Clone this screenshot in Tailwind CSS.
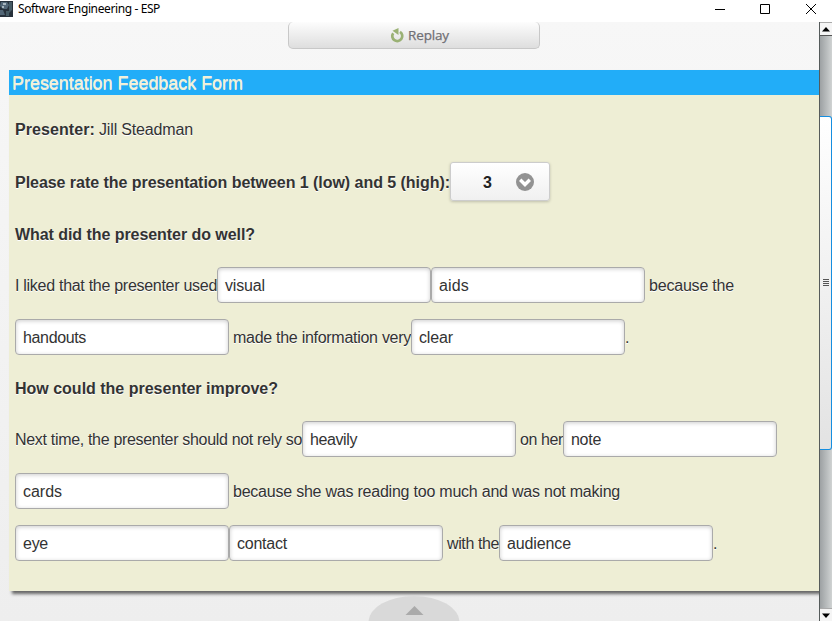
<!DOCTYPE html>
<html lang="en"><head><meta charset="utf-8"><title>Software Engineering - ESP</title>
<script src="https://cdn.jsdelivr.net/npm/@tailwindcss/browser@4"></script></head>
<body class="w-[832px] h-[621px] overflow-hidden bg-white font-['Liberation_Sans',Arial,sans-serif] text-[16px] text-[#333]">
<div class="flex flex-col w-full h-full">
 <header class="flex h-[22px] shrink-0 text-black">
  <svg class="mt-[1px] shrink-0" width="13" height="16" viewBox="0 0 13 16"><path fill="#27313b" d="M0 0h13v16H0z"/><path fill="#526676" d="M1 1h6l2 3-2 4H3L0 5zM0 9h3l2 5H0z"/><path fill="#a8b5bd" d="M3 2h3v2H3zM2 5h2v2H2z"/><path fill="#465b65" d="M9 1h3v8l-3 3zM6 10h3v5H6z"/></svg>
  <span class="ml-[5px] w-[150px] whitespace-nowrap font-['Noto_Sans',sans-serif] text-[12px] leading-[18px]"><span data-w="142">Software Engineering - ESP</span></span>
  <svg class="ml-auto shrink-0" width="132" height="22" viewBox="0 0 132 22" fill="none" stroke="#000"><path d="M15 9.5h10M60.500 4.500h9v9h-9zM106 4l10 10M116 4l-10 10"/></svg>
 </header>
 <div class="flex flex-1 min-h-0">
  <main class="w-[819px] flex flex-col overflow-hidden bg-linear-to-b from-[#f7f7f7] to-[#eeeeee]">
   <button class="ml-[288px] w-[252px] h-[27px] shrink-0 border border-t-0 border-[#c8c8c8] rounded-[5px] bg-linear-to-b from-[#fdfdfd] to-[#dedede] flex items-center pl-[101px] text-[#707075] font-['Open_Sans',sans-serif] text-[13.5px] font-medium">
    <svg width="15" height="17" viewBox="0 0 15 17" fill="none"><path d="M3.200 6.200a5 5 0 1 0 6.800-1.300" stroke="#9ab174" stroke-width="2.700"/><path fill="#9ab174" d="M2.500 3.800L8.500 1v7z"/></svg><span class="ml-[3px] mt-[1px] [-webkit-text-stroke:0.25px_#707075]"><span data-w="41">Replay</span></span>
   </button>
   <section class="mt-[21px] ml-[9px] w-[830px] h-[521px] shrink-0 bg-[#eeeed5] shadow-[3px_3px_3px_#666]">
    <h1 class="h-[25px] bg-[#22adf8] pl-[3px] text-[18px] leading-[26px] text-[#f2f2dc] whitespace-nowrap"><span data-w="231" class="[text-shadow:0_1px_0_#eeeed5]">Presentation Feedback Form</span></h1>
    <div class="pt-[9px] pl-[6px] whitespace-nowrap [text-shadow:0_1px_0_#fff]">
     <div class="h-[52px] flex items-center"><b class="w-[84px]"><span data-w="80">Presenter:</span></b><span><span data-w="94">Jill Steadman</span></span></div>
     <div class="h-[52px] flex items-center"><b class="mt-[2px] w-[435px]"><span data-w="435">Please rate the presentation between 1 (low) and 5 (high):</span></b>
      <div class="mb-[1px] w-[100px] h-[39px] border border-[#ccc] rounded-[3px] bg-linear-to-b from-white to-[#f0f0f0] shadow-[0_1px_3px_#0003] flex items-center text-[#222]"><b class="mt-[2px] ml-[32px] w-[33px]">3</b><svg width="18" height="18" viewBox="0 0 18 18"><circle cx="9" cy="9" r="9" fill="#929292"/><path d="M4.200 6.800L9 11.500 13.800 6.800" fill="none" stroke="#fff" stroke-width="3.400"/></svg></div></div>
     <div class="h-[51px] flex items-center"><b class="mt-[2px]"><span data-w="240">What did the presenter do well?</span></b></div>
     <div class="h-[52px] flex items-center"><span class="mt-[2px] w-[202px]"><span data-w="202">I liked that the presenter used</span></span><div class="w-[214px] h-[36px] border border-[#aaa] rounded-[4px] bg-white pl-[7px] leading-[35px] shadow-[inset_0_1px_4px_#0003]"><span data-w="40">visual</span></div><div class="w-[214px] h-[36px] border border-[#aaa] rounded-[4px] bg-white pl-[7px] leading-[35px] shadow-[inset_0_1px_4px_#0003]"><span data-w="30">aids</span></div><span class="mt-[2px] ml-[4px]"><span data-w="85">because the</span></span></div>
     <div class="h-[52px] flex items-center"><div class="w-[214px] h-[36px] border border-[#aaa] rounded-[4px] bg-white pl-[7px] leading-[35px] shadow-[inset_0_1px_4px_#0003]"><span data-w="63">handouts</span></div><span class="mt-[2px] ml-[4px] w-[178px]"><span data-w="178">made the information very</span></span><div class="w-[214px] h-[36px] border border-[#aaa] rounded-[4px] bg-white pl-[7px] leading-[35px] shadow-[inset_0_1px_4px_#0003]"><span data-w="34">clear</span></div><span class="mt-[2px]">.</span></div>
     <div class="h-[50px] flex items-center"><b class="mt-[2px]"><span data-w="263">How could the presenter improve?</span></b></div>
     <div class="h-[52px] flex items-center"><span class="mt-[2px] w-[287px]"><span data-w="287">Next time, the presenter should not rely so</span></span><div class="w-[214px] h-[36px] border border-[#aaa] rounded-[4px] bg-white pl-[7px] leading-[35px] shadow-[inset_0_1px_4px_#0003]"><span data-w="47">heavily</span></div><span class="mt-[2px] ml-[4px] w-[43px]"><span data-w="43">on her</span></span><div class="w-[214px] h-[36px] border border-[#aaa] rounded-[4px] bg-white pl-[7px] leading-[35px] shadow-[inset_0_1px_4px_#0003]"><span data-w="30">note</span></div></div>
     <div class="h-[52px] flex items-center"><div class="w-[214px] h-[36px] border border-[#aaa] rounded-[4px] bg-white pl-[7px] leading-[35px] shadow-[inset_0_1px_4px_#0003]"><span data-w="39">cards</span></div><span class="mt-[2px] ml-[4px]"><span data-w="387">because she was reading too much and was not making</span></span></div>
     <div class="h-[52px] flex items-center"><div class="w-[214px] h-[36px] border border-[#aaa] rounded-[4px] bg-white pl-[7px] leading-[35px] shadow-[inset_0_1px_4px_#0003]"><span data-w="25">eye</span></div><div class="w-[214px] h-[36px] border border-[#aaa] rounded-[4px] bg-white pl-[7px] leading-[35px] shadow-[inset_0_1px_4px_#0003]"><span data-w="50">contact</span></div><span class="mt-[2px] ml-[4px] w-[52px]"><span data-w="52">with the</span></span><div class="w-[214px] h-[36px] border border-[#aaa] rounded-[4px] bg-white pl-[7px] leading-[35px] shadow-[inset_0_1px_4px_#0003]"><span data-w="64">audience</span></div><span class="mt-[2px]">.</span></div>
    </div>
   </section>
   <svg class="relative ml-[368px] mt-[5px] shrink-0" width="92" height="25" viewBox="0 0 92 25"><ellipse cx="46" cy="26" rx="45.500" ry="26" fill="#d9d9d9"/><path d="M37.500 19l9-9 9 9z" fill="#aaa"/></svg>
  </main>
  <aside class="w-[13px] flex flex-col border-l border-[#555b5b] bg-linear-to-r from-[#9da1a3] to-[#d0d3d3]">
   <div class="h-[14px] bg-[#f5f5f5] border-t border-b border-t-[#aaa] border-b-[#555] flex justify-center items-center"><svg width="8" height="5" viewBox="0 0 8 5"><path d="M0 4.500L4 0l4 4.500z"/></svg></div>
   <div class="mt-[80px] h-[334px] border border-l-0 border-[#168ee0] rounded-r-[3px] bg-linear-to-b from-white to-[#e3e3e3] flex items-center justify-center"><svg class="ml-[1px]" width="6" height="8" viewBox="0 0 6 8"><path d="M0 .5h6M0 2.500h6M0 4.500h6M0 6.500h6" stroke="#555"/></svg></div>
   <div class="mt-auto h-[13px] bg-[#f5f5f5] border-t border-[#aaa] flex justify-center items-center"><svg width="8" height="5" viewBox="0 0 8 5"><path d="M0 .5h8L4 5z"/></svg></div>
  </aside>
 </div>
</div>
<script>
function fitLabels(){document.querySelectorAll('[data-w]').forEach(e=>{e.style.letterSpacing='0px';const w=e.getBoundingClientRect().width;e.style.letterSpacing=((+e.dataset.w-w)/e.textContent.length)+'px'})}
addEventListener('load',()=>{fitLabels();requestAnimationFrame(fitLabels);setTimeout(fitLabels,50)});
document.fonts.ready.then(fitLabels);
new ResizeObserver(fitLabels).observe(document.querySelector('header'));
</script>
</body></html>
